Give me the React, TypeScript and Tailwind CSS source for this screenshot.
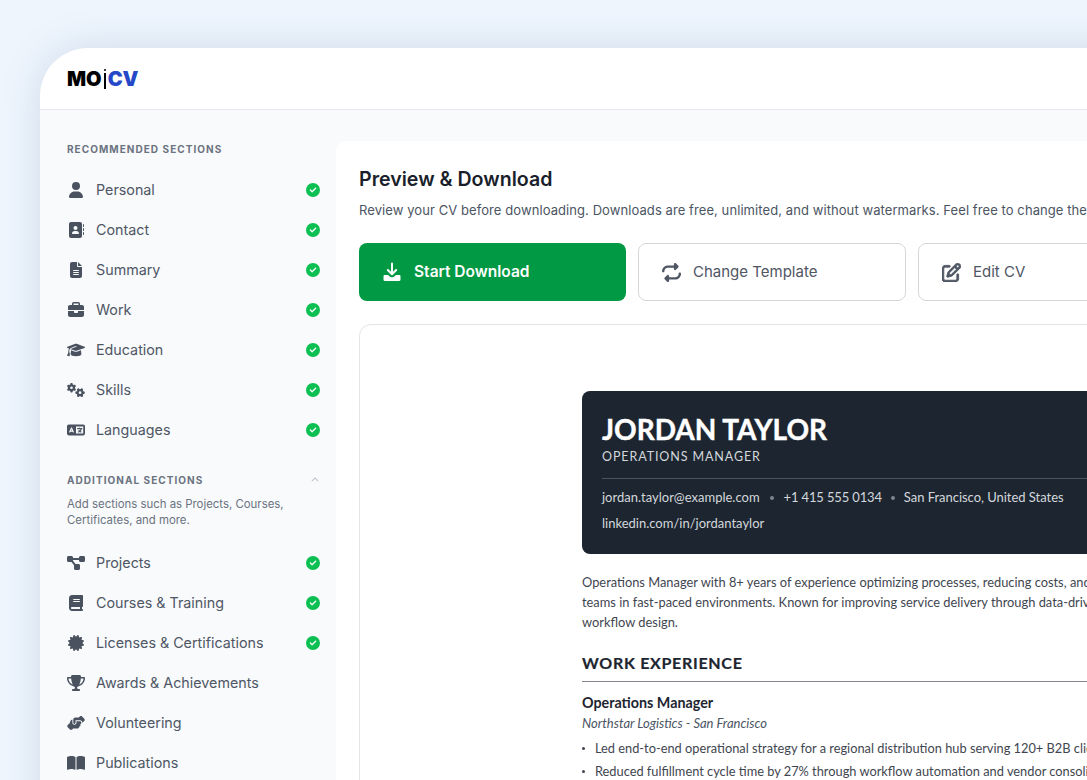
import React from "react";
import {
  FaUser, FaAddressBook, FaFileLines, FaBriefcase, FaGraduationCap, FaGears, FaLanguage,
  FaDiagramProject, FaBook, FaCertificate, FaTrophy, FaHandshakeAngle, FaBookOpen,
  FaCircleCheck, FaRepeat, FaRegPenToSquare, FaChevronUp,
} from "react-icons/fa6";

type Item = { label: string; icon: React.ComponentType<{ className?: string }>; done?: boolean };

const recommended: Item[] = [
  { label: "Personal", icon: FaUser, done: true },
  { label: "Contact", icon: FaAddressBook, done: true },
  { label: "Summary", icon: FaFileLines, done: true },
  { label: "Work", icon: FaBriefcase, done: true },
  { label: "Education", icon: FaGraduationCap, done: true },
  { label: "Skills", icon: FaGears, done: true },
  { label: "Languages", icon: FaLanguage, done: true },
];

const additional: Item[] = [
  { label: "Projects", icon: FaDiagramProject, done: true },
  { label: "Courses & Training", icon: FaBook, done: true },
  { label: "Licenses & Certifications", icon: FaCertificate, done: true },
  { label: "Awards & Achievements", icon: FaTrophy },
  { label: "Volunteering", icon: FaHandshakeAngle },
  { label: "Publications", icon: FaBookOpen },
];

function Row({ item }: { item: Item }) {
  const Icon = item.icon;
  return (
    <div className="flex h-[40px] items-center">
      <span className="flex w-[18px] justify-center">
        <Icon className="h-[16px] w-[18px] text-[#4a5260]" />
      </span>
      <span className="ml-[11px] flex-1 text-[14.3px] text-[#4f5664]">{item.label}</span>
      {item.done && <FaCircleCheck className="h-[14px] w-[14px] text-[#0cbf52]" />}
    </div>
  );
}

function TrayDownload() {
  return (
    <svg viewBox="0 0 20 20" className="h-[20px] w-[20px]" fill="none">
      <path d="M10 1.5V12M5.8 8l4.2 4.3L14.2 8" stroke="white" strokeWidth="2" strokeLinecap="round" strokeLinejoin="round" />
      <path d="M1.5 14.2c0-.7.5-1.2 1.2-1.2h3.4l2.6 2.3h2.6l2.6-2.3h3.4c.7 0 1.2.5 1.2 1.2v3.6c0 .7-.5 1.2-1.2 1.2H2.7c-.7 0-1.2-.5-1.2-1.2z" fill="white" />
    </svg>
  );
}

export default function App() {
  return (
    <div className="h-[780px] w-[1087px] overflow-hidden bg-[#eef5fd] pl-[40px] pt-[48px] font-['Inter',sans-serif]">
      <div className="h-[800px] w-[1200px] overflow-hidden rounded-tl-[48px] bg-white shadow-[0_0_40px_rgba(90,120,160,0.2)]">
        <header className="flex h-[62px] items-center border-b border-[#e5e7eb] pl-[27px]">
          <span className="flex items-center text-[20px] font-black leading-none text-black">
            MO
            <span className="relative mx-[2px] h-[20px] w-[2px]">
              <span className="absolute left-0 top-0 h-[2px] w-[2px] rounded-full bg-black" />
              <span className="absolute left-0 top-[4px] h-[16px] w-[2px] bg-black" />
            </span>
            <span className="text-[#2448c8]">CV</span>
          </span>
        </header>
        <div className="flex bg-[#f8fafc]">
          <aside className="w-[296px] shrink-0 pl-[27px] pr-[16px] pt-[32px]">
            <h2 className="text-[10px] font-bold leading-[14px] tracking-[1.05px] text-[#6b7280]">RECOMMENDED SECTIONS</h2>
            <div className="mt-[14px]">
              {recommended.map((i) => <Row key={i.label} item={i} />)}
            </div>
            <div className="mt-[23px] flex h-[14px] items-center justify-between">
              <h2 className="text-[10px] font-bold tracking-[1.05px] text-[#6b7280]">ADDITIONAL SECTIONS</h2>
              <FaChevronUp className="h-[8px] w-[10px] text-[#b8bec8]" />
            </div>
            <p className="mt-[9px] text-[11.4px] leading-[16px] text-[#6b7280]">
              Add sections such as Projects, Courses, Certificates, and more.
            </p>
            <div className="mt-[15px]">
              {additional.map((i) => <Row key={i.label} item={i} />)}
            </div>
          </aside>
          <main className="mt-[31px] min-w-0 flex-1 rounded-tl-[10px] bg-white pl-[23px] pt-[25px]">
            <h1 className="text-[19.6px] font-semibold leading-[26px] text-[#1a1f2b]">Preview &amp; Download</h1>
            <p className="mt-[9px] w-[728px] whitespace-nowrap text-[13px] leading-[18px] tracking-[0.08px] text-[#4b5563]">
              Review your CV before downloading. Downloads are free, unlimited, and without watermarks. Feel free to change the
            </p>
            <div className="mt-[24px] flex gap-[12px]">
              <button className="flex h-[58px] w-[267px] items-center gap-[12px] rounded-[8px] bg-[#019943] pl-[23px] text-[15.5px] font-semibold text-white">
                <TrayDownload /> Start Download
              </button>
              <button className="flex h-[58px] w-[268px] items-center gap-[12px] rounded-[8px] border border-[#d4d6da] pl-[23px] text-[15px] text-[#4f5664]">
                <FaRepeat className="h-[19px] w-[19px]" /> Change Template
              </button>
              <button className="flex h-[58px] w-[268px] items-center gap-[12px] rounded-[8px] border border-[#d4d6da] pl-[23px] text-[15px] text-[#4f5664]">
                <FaRegPenToSquare className="h-[19px] w-[19px]" stroke="currentColor" strokeWidth={24} /> Edit CV
              </button>
            </div>
            <div className="mt-[23px] h-[600px] w-[900px] rounded-tl-[12px] border border-[#e2e4e8] pl-[222px] pt-[66px] font-['Lato',sans-serif]">
              <div className="h-[163px] w-[505px] overflow-hidden rounded-l-[8px] bg-[#1d2630] pl-[20px] pt-[21px] text-[#d3d7dc]">
                <div className="text-[28px] font-bold leading-[34px] text-white [-webkit-text-stroke:0.4px_white]">JORDAN TAYLOR</div>
                <div className="mt-[3px] text-[12.5px] leading-[16px] tracking-[0.9px]">OPERATIONS MANAGER</div>
                <div className="mt-[13px] h-px bg-[#4a535e]" />
                <div className="mt-[10px] flex items-center text-[13px] leading-[17px]">
                  <span>jordan.taylor@example.com</span>
                  <span className="mx-[10px] h-[4px] w-[4px] rounded-full bg-[#7d858f]" />
                  <span className="tracking-[-0.15px]">+1 415 555 0134</span>
                  <span className="mx-[9px] h-[4px] w-[4px] rounded-full bg-[#7d858f]" />
                  <span className="tracking-[-0.03px]">San Francisco, United States</span>
                </div>
                <div className="mt-[9px] text-[13px] leading-[17px]">linkedin.com/in/jordantaylor</div>
              </div>
              <div className="mt-[18px] w-[505px] overflow-hidden text-[12.85px] leading-[20px] text-[#3f4650]">
                <div className="whitespace-nowrap">Operations Manager with 8+ years of experience optimizing processes, reducing costs, and</div>
                <div className="whitespace-nowrap">teams in fast-paced environments. Known for improving service delivery through data-driven</div>
                <div>workflow design.</div>
              </div>
              <h3 className="mt-[21px] w-[505px] border-b border-[#85888e] pb-[8px] text-[16px] font-bold leading-[20px] tracking-[0.7px] text-[#1d2630] [-webkit-text-stroke:0.2px_#1d2630]">WORK EXPERIENCE</h3>
              <div className="mt-[11px] text-[14.3px] font-bold leading-[20px] text-[#1d2630]">Operations Manager</div>
              <div className="text-[13px] italic leading-[20px] text-[#4b5563]">Northstar Logistics - San Francisco</div>
              <ul className="mt-[4px] w-[505px] overflow-hidden whitespace-nowrap text-[12.8px] leading-[23px] text-[#3f4650]">
                <li className="flex items-center"><span className="mr-[10px] h-[3px] w-[3px] shrink-0 rounded-full bg-[#3f4650]" />Led end-to-end operational strategy for a regional distribution hub serving 120+ B2B clients</li>
                <li className="flex items-center"><span className="mr-[10px] h-[3px] w-[3px] shrink-0 rounded-full bg-[#3f4650]" />Reduced fulfillment cycle time by 27% through workflow automation and vendor consolidation</li>
              </ul>
            </div>
          </main>
        </div>
      </div>
    </div>
  );
}
